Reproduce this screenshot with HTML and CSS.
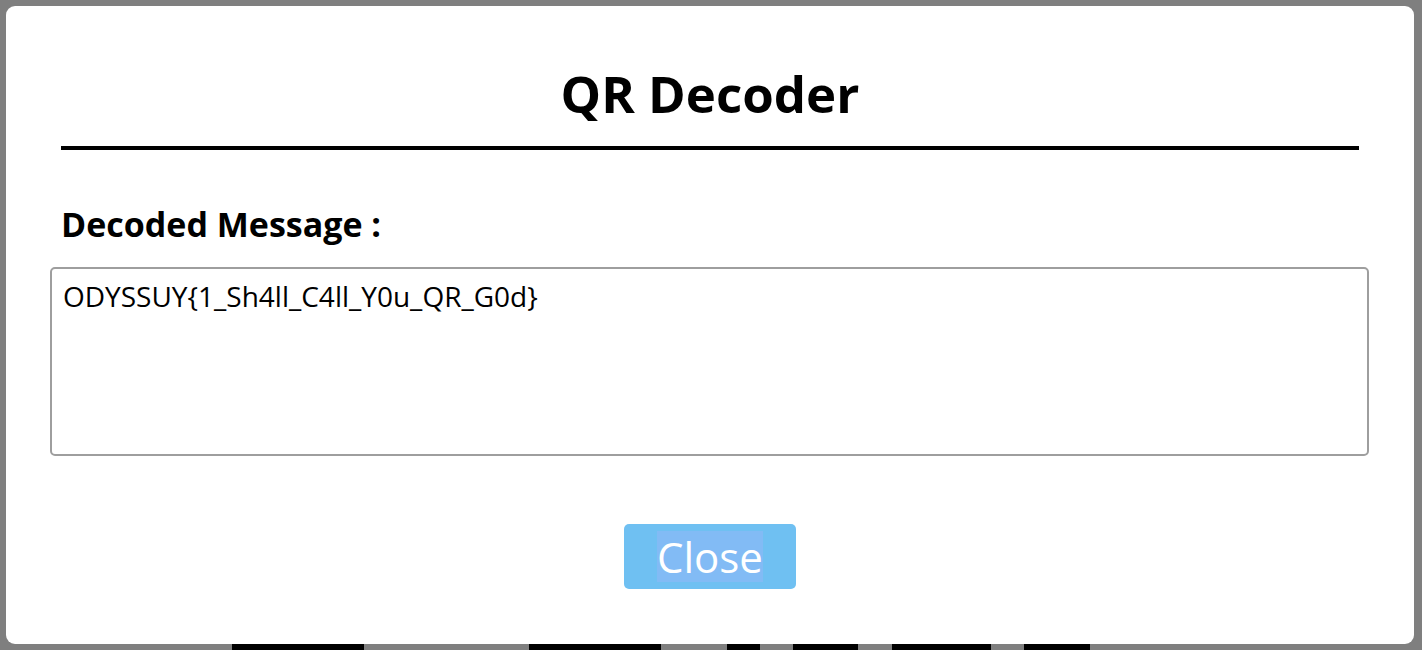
FILE: index.html
```html
<!DOCTYPE html>
<html lang="en">
<head>
<meta charset="utf-8">
<title>QR Decoder</title>
<link rel="stylesheet" href="styles.css">
</head>
<body>
<div class="modal">
  <h1 class="title">QR Decoder</h1>
  <div class="divider"></div>
  <label class="label" for="msg">Decoded Message :</label>
  <textarea id="msg" class="message" readonly>ODYSSUY{1_Sh4ll_C4ll_Y0u_QR_G0d}</textarea>
  <div class="actions">
    <button class="close-btn" type="button"><span class="sel">Close</span></button>
  </div>
</div>
<div class="qr-strip">
  <span class="bar b1"></span>
  <span class="bar b2"></span>
  <span class="bar b3"></span>
  <span class="bar b4"></span>
  <span class="bar b5"></span>
  <span class="bar b6"></span>
</div>
</body>
</html>
```
FILE: styles.css
```css
html, body {
  margin: 0;
  padding: 0;
}
body {
  background: #7f7f7f;
  font-family: "Open Sans", "Noto Sans", sans-serif;
  width: 1422px;
  height: 650px;
  overflow: hidden;
  display: flex;
  flex-direction: column;
}
.modal {
  margin: 6px 8px 0 6px;
  height: 638px;
  box-sizing: border-box;
  background: #ffffff;
  border-radius: 9px;
  padding: 52px 0 0 0;
  display: flex;
  flex-direction: column;
}
.title {
  margin: 0;
  font-size: 51px;
  font-weight: 700;
  text-align: center;
  color: #000;
  line-height: normal;
}
.divider {
  margin: 18px 55px 0 55px;
  height: 4px;
  background: #000;
}
.label {
  margin: 51px 0 0 55px;
  font-size: 34px;
  font-weight: 700;
  color: #000;
  line-height: normal;
}
.message {
  margin: 20px 45px 0 44px;
  height: 189px;
  box-sizing: border-box;
  border: 2px solid #9e9e9e;
  border-radius: 5px;
  padding: 8px 11px;
  font-family: "Open Sans", "Noto Sans", sans-serif;
  font-size: 28px;
  line-height: normal;
  color: #000;
  resize: none;
  outline: none;
  background: #fff;
}
.actions {
  display: flex;
  justify-content: center;
  margin-top: 68px;
}
.close-btn {
  background: #6fc0f2;
  border: none;
  border-radius: 5px;
  padding: 7px 33px;
  font-family: "Open Sans", "Noto Sans", sans-serif;
  font-size: 42px;
  line-height: 51px;
  color: #fff;
  cursor: pointer;
}
.sel {
  display: inline-block;
  background: #82bbf5;
}
.qr-strip {
  display: flex;
  height: 6px;
  padding-left: 232px;
}
.bar {
  display: block;
  height: 6px;
  background: #000;
}
.b1 { width: 132px; }
.b2 { width: 132px; margin-left: 165px; }
.b3 { width: 33px; margin-left: 66px; }
.b4 { width: 65px; margin-left: 33px; }
.b5 { width: 99px; margin-left: 34px; }
.b6 { width: 66px; margin-left: 33px; }
```
